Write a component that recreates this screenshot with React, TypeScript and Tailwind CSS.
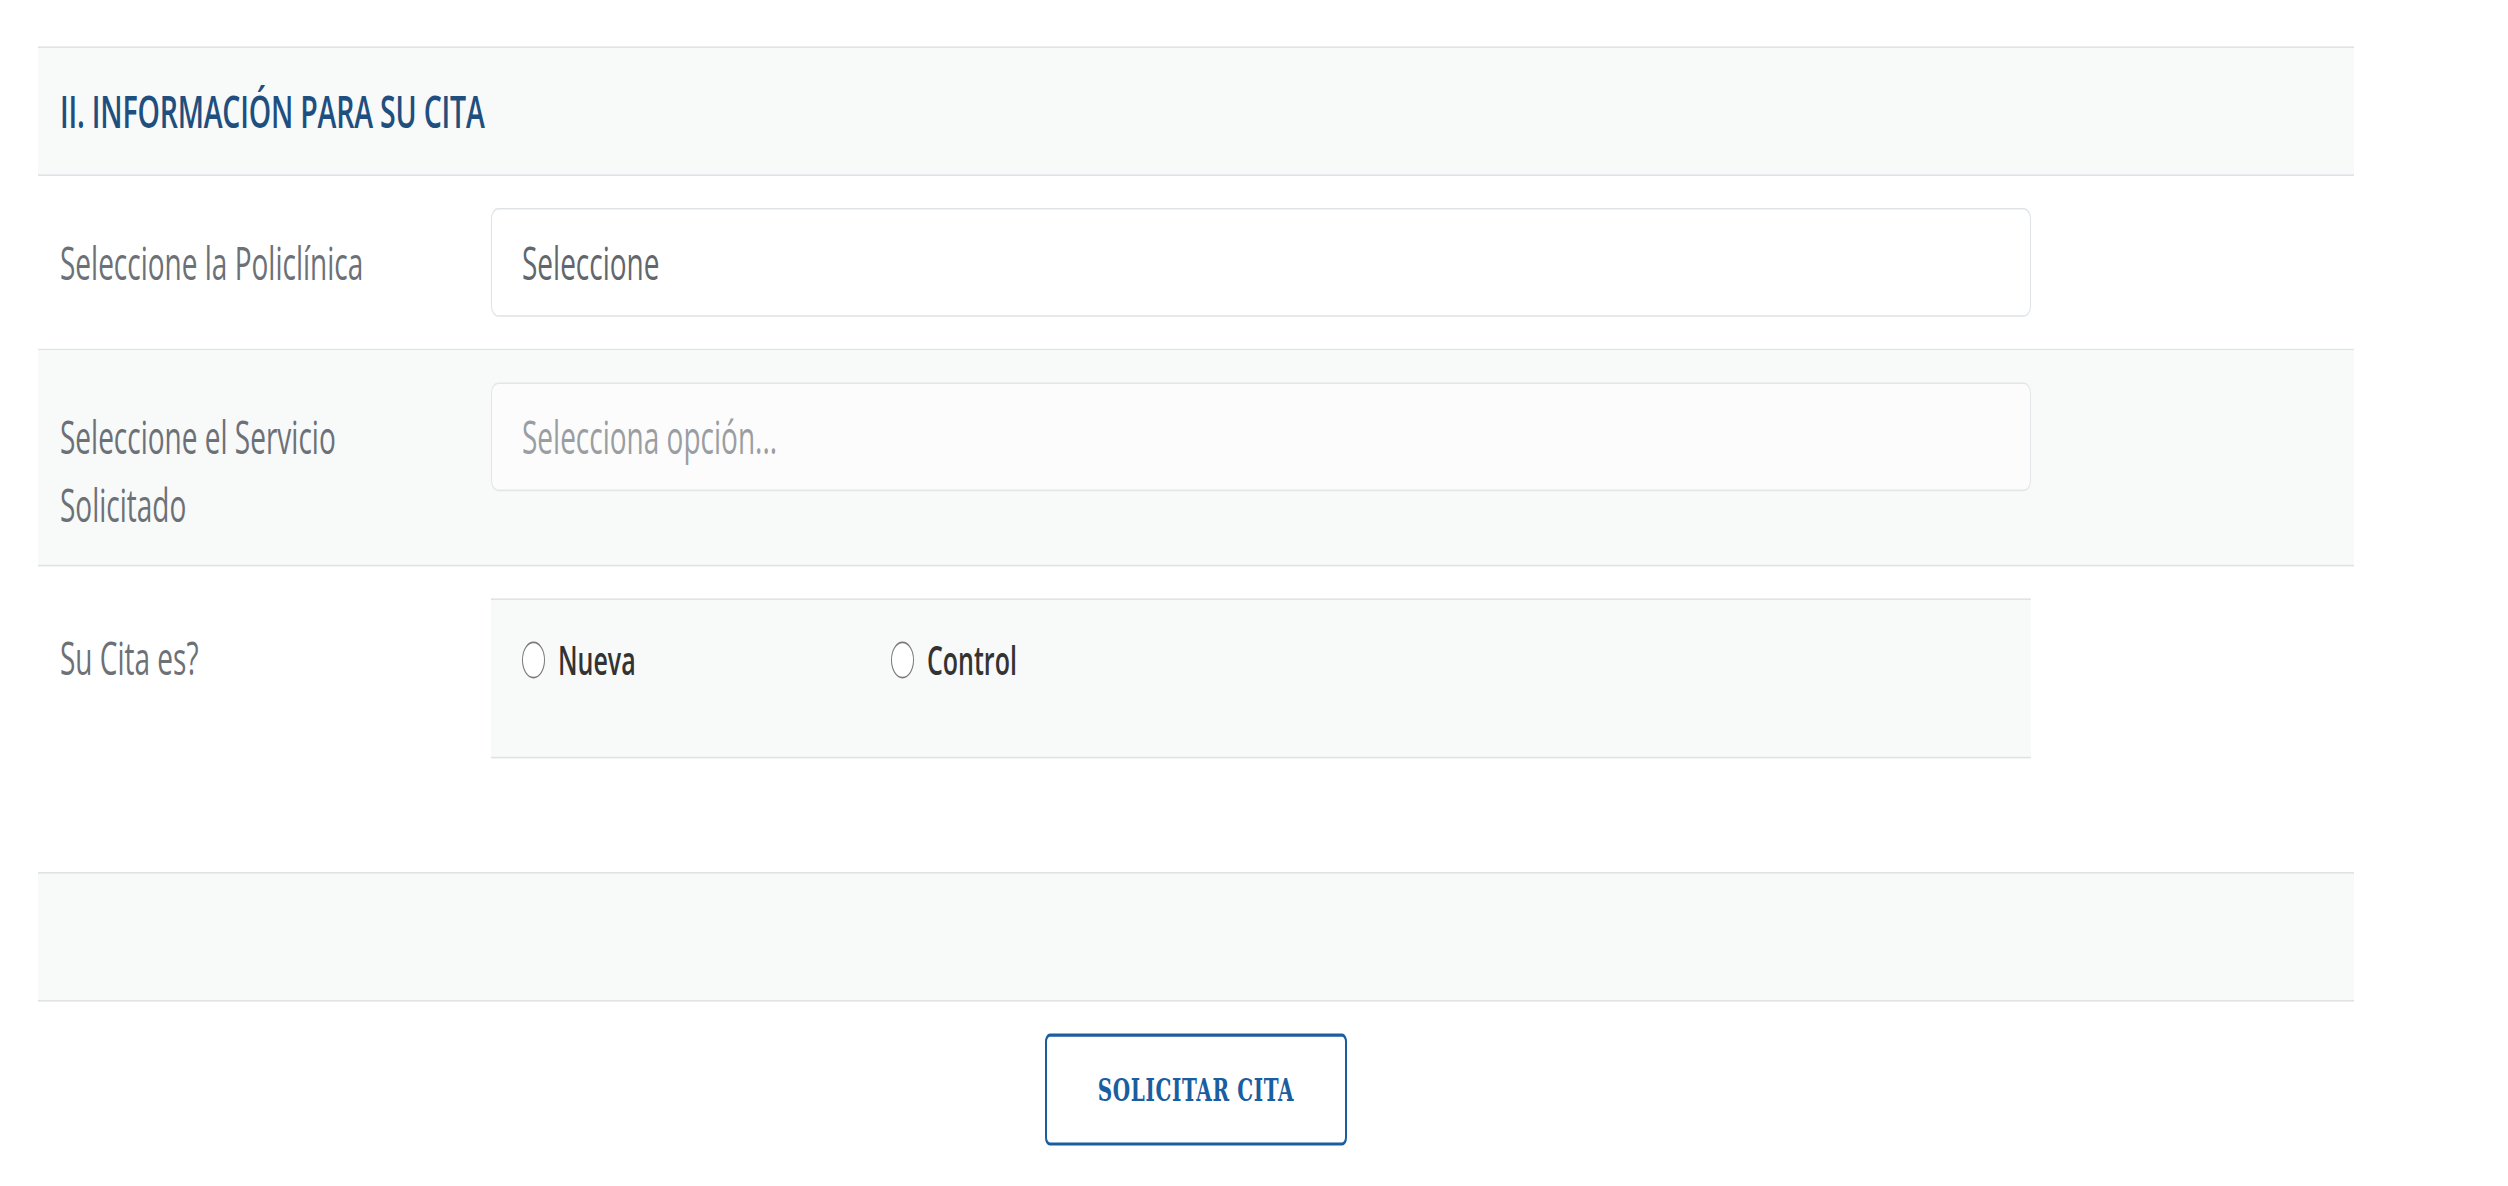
import React from 'react';

const sans = { fontFamily: '"Open Sans", "Noto Sans", sans-serif' };

function Radio({ label }: { label: string }) {
  return (
    <label className="flex w-[369px] items-center gap-[13px]">
      <span className="h-[23px] w-[23px] rounded-full border-[1.5px] border-[#7a7a7a] bg-white" />
      <span className="text-[25px] font-semibold leading-[42px] text-[#333]">{label}</span>
    </label>
  );
}

export default function App() {
  return (
    <div className="h-[1186px] w-[2508px] overflow-hidden bg-white">
      <div className="h-[741px] w-[2508px] origin-top scale-y-[1.6]" style={sans}>
        <div className="ml-[38px] w-[2316px] pt-[29px]">
          {/* section header */}
          <div className="flex h-[81px] items-center border-y border-[#dfe3e6] bg-[#f8f9f9] pl-[22px]">
            <h2 className="text-[28.5px] font-semibold tracking-[-0.2px] text-[#1f4f7e]">
              II. INFORMACIÓN PARA SU CITA
            </h2>
          </div>

          {/* policlinica */}
          <div className="flex border-b border-[#dfe3e6] py-[20px]">
            <div className="w-[453px] pl-[22px] pt-[13px] text-[28px] leading-[42px] text-[#6c7177]">
              Seleccione la Policlínica
            </div>
            <div className="flex h-[68px] w-[1540px] items-center rounded-[7px] border border-[#dfe3e6] bg-white px-[30px] text-[28px] text-[#62676c]">
              Seleccione
            </div>
          </div>

          {/* servicio */}
          <div className="flex border-b border-[#dfe3e6] bg-[#f8f9f9] pb-[17px] pt-[20px]">
            <div className="w-[453px] pl-[22px] pr-[30px] pt-[13px] text-[28px] leading-[42px] text-[#6c7177]">
              Seleccione el Servicio Solicitado
            </div>
            <div className="flex h-[68px] w-[1540px] items-center rounded-[7px] border border-[#e3e6e8] bg-[#fcfcfc] px-[30px] text-[28px] text-[#9a9ea2]">
              Selecciona opción...
            </div>
          </div>

          {/* tipo de cita */}
          <div className="flex pb-[71px] pt-[20px]">
            <div className="w-[453px] pl-[22px] pt-[16px] text-[28px] leading-[42px] text-[#6c7177]">Su Cita es?</div>
            <div className="flex h-[100px] w-[1540px] items-start border-y border-[#dfe3e6] bg-[#f8f9f9] pl-[31px] pt-[16px]">
              <Radio label="Nueva" />
              <Radio label="Control" />
            </div>
          </div>

          <div className="h-[81px] border-y border-[#dfe3e6] bg-[#f8f9f9]" />

          <div className="flex justify-center pt-[20px]">
            <button
              className="h-[70px] w-[302px] rounded-[5px] border-2 border-[#1a5e9f] bg-white text-[20px] font-bold tracking-[0.6px] text-[#1a5e9f]"
              style={{ fontFamily: '"DejaVu Serif", "Liberation Serif", serif' }}
            >
              SOLICITAR CITA
            </button>
          </div>
        </div>
      </div>
    </div>
  );
}
